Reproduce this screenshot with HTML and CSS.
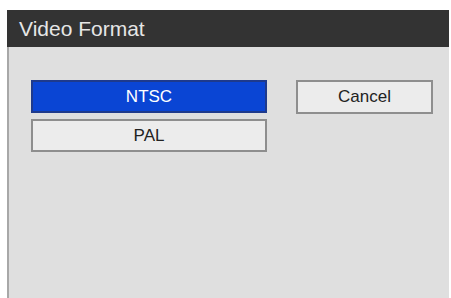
FILE: index.html
```html
<!DOCTYPE html>
<html lang="en">
<head>
  <meta charset="UTF-8" />
  <title>Video Format</title>
  <link rel="stylesheet" href="styles.css">
</head>
<body>
  <div class="dialog">
    <div class="dialog-title">Video Format</div>
    <div class="dialog-body">
      <div class="options">
        <button class="btn btn--active">NTSC</button>
        <button class="btn">PAL</button>
      </div>
      <button class="btn btn--cancel">Cancel</button>
    </div>
  </div>
</body>
</html>
```

FILE: styles.css
```css
body {
  margin: 0;
  padding: 10px 2px 0 7px;
  background: #fff;
  font-family: 'Liberation Sans', Arial, sans-serif;
}

.dialog {
  height: 288px;
  display: flex;
  flex-direction: column;
  background: #dfdfdf;
  border-left: 2px solid #a8a8a8;
  box-sizing: border-box;
}

.dialog-title {
  height: 37px;
  background: #333;
  color: #e6e6e6;
  font-size: 21px;
  line-height: 37px;
  padding-left: 12px;
  margin-left: -2px;
  flex-shrink: 0;
}

.dialog-body {
  display: flex;
  align-items: flex-start;
  gap: 29px;
  padding: 33px 0 0 22px;
}

.options {
  display: flex;
  flex-direction: column;
  gap: 6px;
}

.btn {
  width: 236px;
  height: 33px;
  padding: 0;
  background: #ececec;
  border: 2px solid #8e8e8e;
  color: #222;
  font-family: inherit;
  font-size: 17px;
}

.btn--active {
  background: #0a45d4;
  border-color: #1e3a8c;
  color: #fff;
}

.btn--cancel {
  width: 137px;
  height: 34px;
}
```
